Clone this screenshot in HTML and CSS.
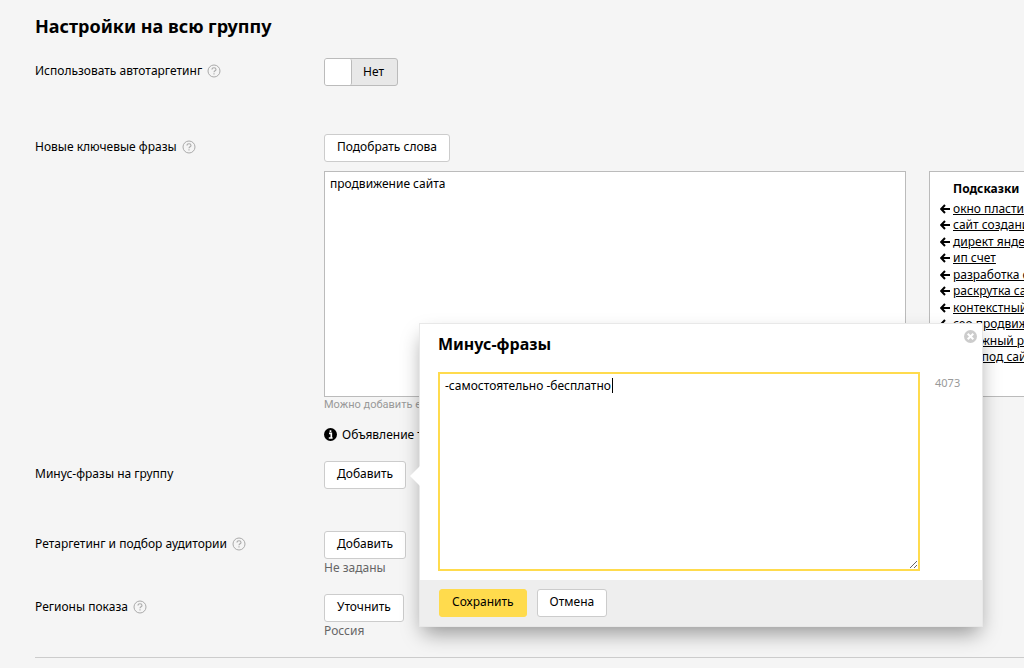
FILE: index.html
```
<!DOCTYPE html>
<html lang="ru">
<head>
    <meta charset="UTF-8">
    <meta name="viewport" content="width=device-width, initial-scale=1.0">
    <title>Настройки на всю группу</title>
    <link rel="stylesheet" href="styles.css">
</head>
<body>
    <svg class="sprite" aria-hidden="true">
        <symbol id="icon-help" viewBox="0 0 14 14">
            <circle cx="7" cy="7" r="6" fill="none" stroke="#aaa"/>
            <path d="M5 5.600C5 4.400 5.900 3.700 7 3.700s2 .7 2 1.700c0 1.300-2 1.500-2 2.900M7 9.300v1.300" fill="none" stroke="#aaa" stroke-width="1.100"/>
        </symbol>
        <symbol id="icon-arrow" viewBox="0 0 10 10">
            <path d="M10 5H1.500M5 1L1.200 5 5 9" fill="none" stroke="#000" stroke-width="2"/>
        </symbol>
    </svg>

    <main class="settings">
        <h1 class="title">Настройки на всю группу</h1>

        <div class="row row-auto">
            <div class="row-label">
                <label for="autoTarget">Использовать автотаргетинг</label>
                <button type="button" class="help" aria-label="Справка"><svg><use href="#icon-help"/></svg></button>
            </div>
            <div class="row-control">
                <button type="button" id="autoTarget" class="switch" role="switch" aria-checked="false">
                    <span class="switch-knob"></span>
                    <span class="switch-text">Нет</span>
                </button>
            </div>
        </div>

        <div class="row row-phrases">
            <div class="row-label">
                <label for="phrases">Новые ключевые фразы</label>
                <button type="button" class="help" aria-label="Справка"><svg><use href="#icon-help"/></svg></button>
            </div>
            <div class="row-control">
                <button type="button" class="btn">Подобрать слова</button>
                <div class="phrases">
                    <textarea id="phrases" class="phrases-input">продвижение сайта</textarea>
                    <section class="hints">
                        <h2 class="hints-title">Подсказки</h2>
                        <ul class="hints-list">
                            <li><svg><use href="#icon-arrow"/></svg><a href="#">окно пластиковое</a></li>
                            <li><svg><use href="#icon-arrow"/></svg><a href="#">сайт создание</a></li>
                            <li><svg><use href="#icon-arrow"/></svg><a href="#">директ яндекс</a></li>
                            <li><svg><use href="#icon-arrow"/></svg><a href="#">ип счет</a></li>
                            <li><svg><use href="#icon-arrow"/></svg><a href="#">разработка сайта</a></li>
                            <li><svg><use href="#icon-arrow"/></svg><a href="#">раскрутка сайта</a></li>
                            <li><svg><use href="#icon-arrow"/></svg><a href="#">контекстный</a></li>
                            <li><svg><use href="#icon-arrow"/></svg><a href="#">сео продвижение</a></li>
                            <li><svg><use href="#icon-arrow"/></svg><a href="#">надежный ремонт</a></li>
                            <li><svg><use href="#icon-arrow"/></svg><a href="#">сайт под сайт</a></li>
                        </ul>
                    </section>
                </div>
                <p class="limit">Можно добавить ещё</p>
                <p class="notice">
                    <svg viewBox="0 0 13 13"><circle cx="6.500" cy="6.500" r="6.500"/><path d="M5 5.300h2.300V10M4.800 10h3.800M6.500 2.200v1.900" fill="none" stroke="#fff" stroke-width="1.700"/></svg>
                    Объявление требует
                </p>
            </div>
        </div>

        <div class="row row-minus">
            <div class="row-label">Минус-фразы на группу</div>
            <div class="row-control">
                <button type="button" class="btn">Добавить</button>

                <div class="popup" role="dialog" aria-labelledby="minusTitle">
                    <button type="button" class="popup-close" aria-label="Закрыть">
                        <svg viewBox="0 0 13 13"><circle cx="6.500" cy="6.500" r="6.500" fill="#ccc"/><path d="M3.700 3.700l5.600 5.600M9.300 3.700L3.700 9.300" stroke="#fff" stroke-width="2"/></svg>
                    </button>
                    <div class="popup-body">
                        <h2 class="popup-title" id="minusTitle">Минус-фразы</h2>
                        <div class="popup-field">
                            <textarea id="minusInput" class="popup-input" aria-labelledby="minusTitle">-самостоятельно -бесплатно</textarea>
                            <span class="caret"></span>
                            <span class="popup-count">4073</span>
                        </div>
                    </div>
                    <div class="popup-footer">
                        <button type="button" class="btn btn-save">Сохранить</button>
                        <button type="button" class="btn">Отмена</button>
                    </div>
                </div>
            </div>
        </div>

        <div class="row row-retarget">
            <div class="row-label">
                Ретаргетинг и подбор аудитории
                <button type="button" class="help" aria-label="Справка"><svg><use href="#icon-help"/></svg></button>
            </div>
            <div class="row-control">
                <button type="button" class="btn">Добавить</button>
                <p class="value">Не заданы</p>
            </div>
        </div>

        <div class="row row-regions">
            <div class="row-label">
                Регионы показа
                <button type="button" class="help" aria-label="Справка"><svg><use href="#icon-help"/></svg></button>
            </div>
            <div class="row-control">
                <button type="button" class="btn">Уточнить</button>
                <p class="value">Россия</p>
            </div>
        </div>

        <hr class="line">
    </main>
</body>
</html>
```
FILE: styles.css
```
* {
    box-sizing: border-box;
}
body {
    margin: 0;
    background-color: #f5f5f5;
    color: #000;
    font-family: "Noto Sans", Arial, sans-serif;
    font-size: 12px;
    line-height: 16px;
    overflow-x: hidden;
}
button, textarea {
    font: inherit;
    color: inherit;
}
h1, h2, p, ul {
    margin: 0;
    padding: 0;
}
.sprite {
    display: none;
}
.settings {
    padding: 14px 0 0 35px;
    overflow: hidden;
}
.title {
    margin-bottom: 20px;
    font-size: 18px;
    line-height: 24px;
}
.row {
    display: grid;
    grid-template-columns: 289px 1fr;
}
.row-label {
    display: flex;
    align-items: center;
    gap: 5px;
    height: 25px;
}
.row-control {
    position: relative;
    min-width: 0;
}
.row-auto {
    margin-bottom: 48px;
}
.row-phrases {
    margin-bottom: 18px;
}
.row-minus {
    margin-bottom: 42px;
}
.row-retarget {
    margin-bottom: 17px;
}
.row-regions {
    margin-bottom: 17px;
}
.help {
    width: 14px;
    height: 14px;
    padding: 0;
    border: none;
    background: none;
    cursor: pointer;
}
.help svg {
    display: block;
    width: 14px;
    height: 14px;
}
.btn {
    display: block;
    height: 28px;
    padding: 0 12px 2px;
    border: 1px solid #ccc;
    border-radius: 3px;
    background-color: #fff;
    cursor: pointer;
}
.btn-save {
    border-color: #ffdb4d;
    background-color: #ffdb4d;
}
.switch {
    display: flex;
    height: 28px;
    padding: 0;
    border: 1px solid #bbb;
    border-radius: 3px;
    background-color: #e8e8e8;
    line-height: 25px;
    cursor: pointer;
}
.switch-knob {
    width: 27px;
    height: 26px;
    border-right: 1px solid #bbb;
    border-radius: 2px;
    background-color: #fff;
}
.switch-text {
    padding: 0 13px 0 11px;
}
.phrases {
    display: flex;
    gap: 23px;
    height: 226px;
    margin-top: 9px;
}
.phrases-input {
    flex: 0 0 582px;
    padding: 4px 5px;
    border: 1px solid #bbb;
    border-radius: 0;
    background-color: #fff;
    resize: none;
}
.hints {
    flex: 0 0 200px;
    padding: 8px 10px;
    border: 1px solid #bbb;
    background-color: #fff;
}
.hints-title {
    margin-bottom: 3px;
    padding-left: 13px;
    font-size: 12px;
    line-height: 17px;
}
.hints-list {
    list-style: none;
}
.hints-list li {
    display: flex;
    align-items: center;
    gap: 3px;
    height: 17px;
}
.hints-list li:nth-child(even) {
    height: 16px;
}
.hints-list svg {
    width: 10px;
    height: 10px;
}
.hints-list a {
    color: #000;
    white-space: nowrap;
}
.limit {
    color: #999;
    font-family: Roboto, Arial, sans-serif;
    font-size: 11px;
}
.notice {
    display: flex;
    align-items: center;
    gap: 5px;
    margin-top: 13px;
    line-height: 17px;
}
.notice svg {
    width: 13px;
    height: 13px;
}
.value {
    color: #666;
    line-height: 18px;
}
.line {
    height: 1px;
    margin: 0;
    border: none;
    background-color: #ccc;
}
/* popup next to the "Добавить" button */
.popup {
    position: absolute;
    left: 95px;
    bottom: -138px;
    z-index: 10;
    width: 564px;
    border: 1px solid #e8e8e8;
    background-color: #fff;
    box-shadow: 0 10px 20px -4px rgba(0, 0, 0, 0.4);
}
.popup::before {
    content: "";
    position: absolute;
    top: 142px;
    left: -10px;
    border: 10px solid transparent;
    border-right-color: #fff;
    border-left: none;
}
.popup-close {
    position: absolute;
    top: 6px;
    right: 5px;
    width: 13px;
    height: 13px;
    padding: 0;
    border: none;
    background: none;
    cursor: pointer;
}
.popup-close svg {
    display: block;
}
.popup-body {
    padding: 8px 18px 9px;
}
.popup-title {
    margin-bottom: 16px;
    font-size: 16px;
    line-height: 24px;
}
.popup-field {
    position: relative;
    display: flex;
    gap: 15px;
}
.popup-input {
    width: 482px;
    height: 199px;
    padding: 4px 5px;
    border: 2px solid #ffdb4d;
    border-radius: 0;
    outline: none;
    background-color: #fff;
    resize: both;
}
.caret {
    position: absolute;
    top: 6px;
    left: 174px;
    width: 1px;
    height: 15px;
    background-color: #000;
}
.popup-count {
    padding-top: 3px;
    color: #999;
    font-size: 11px;
}
.popup-footer {
    display: flex;
    gap: 10px;
    padding: 9px 19px;
    background-color: #eee;
}
```
